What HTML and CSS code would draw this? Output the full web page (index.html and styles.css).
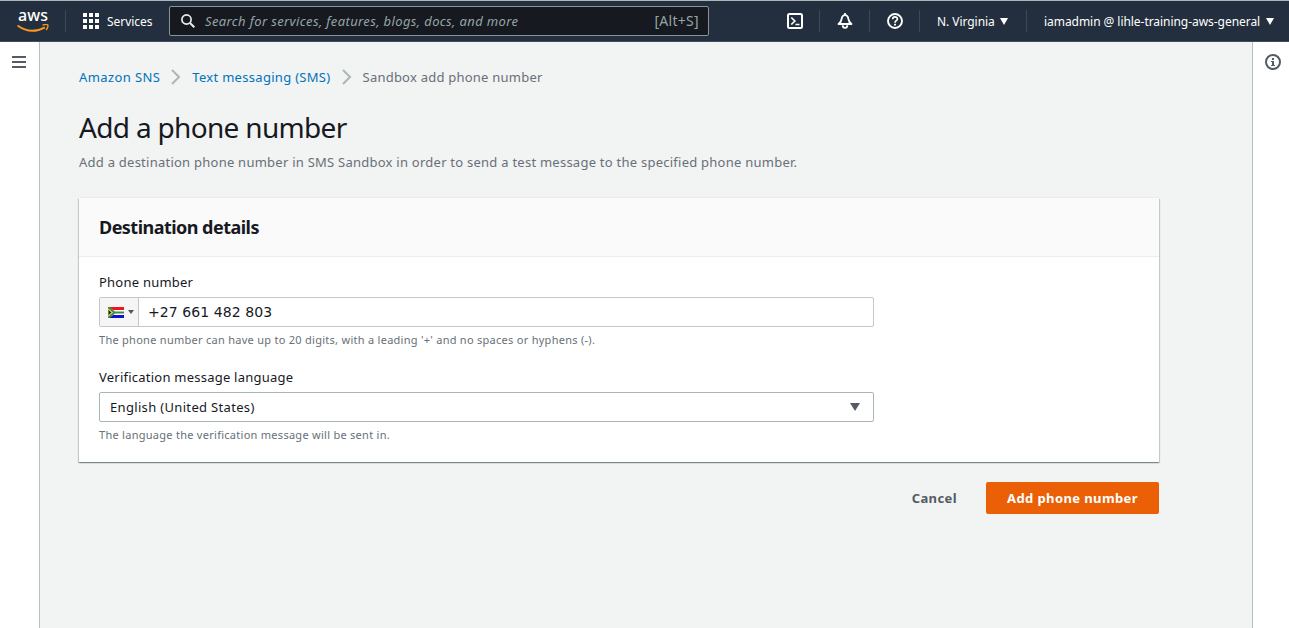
FILE: index.html
```
<!DOCTYPE html>
<html lang="en">
<head>
<meta charset="utf-8">
<title>Add a phone number</title>
<link rel="stylesheet" href="styles.css">
</head>
<body>
<header class="topbar">
  <div class="logo">
    <span class="logo-text">aws</span>
    <svg width="32" height="9" viewBox="0 0 32 9" fill="none" stroke="#f7981f"><path d="M.5 1.500C9 7.800 19 8.200 28 3.300" stroke-width="1.900"/><path d="M25.500 1.300c2-.8 4.600-.9 5.200-.3s0 3.200-1.600 5" stroke-width="1.400"/></svg>
  </div>
  <span class="divider"></span>
  <a class="services">
    <svg width="16" height="16" viewBox="0 0 16 16" fill="#fff"><path d="M0 0h4v4H0zM6 0h4v4H6zM12 0h4v4h-4zM0 6h4v4H0zM6 6h4v4H6zM12 6h4v4h-4zM0 12h4v4H0zM6 12h4v4H6zM12 12h4v4h-4z"/></svg>
    <span class="bar-text">Services</span>
  </a>
  <div class="search">
    <svg width="14" height="14" viewBox="0 0 14 14" fill="none" stroke="#eaeded" stroke-width="1.700"><circle cx="5.500" cy="5.500" r="4.600"/><path d="M9 9l4.300 4.300" stroke-width="2"/></svg>
    <span class="search-placeholder">Search for services, features, blogs, docs, and more</span>
    <span class="search-key">[Alt+S]</span>
  </div>
  <div class="tools">
    <a class="tool"><svg width="16" height="16" viewBox="0 0 16 16" fill="none" stroke="#fff" stroke-width="2"><rect x="1" y="1" width="14" height="14" rx="1.500"/><path d="M4.300 4.500L7.800 8 4.300 11.500M8.500 11.500H12.500" stroke-width="1.700"/></svg></a>
    <a class="tool"><svg width="16" height="16" viewBox="0 0 16 16" fill="none" stroke="#fff" stroke-width="1.800"><path d="M1.500 11C3.800 9.600 4.300 8 4.600 6 5 3.500 6 2.200 8 2.200s3 1.300 3.400 3.800C11.700 8 12.200 9.600 14.500 11z" stroke-linejoin="round"/><path d="M8 0v2M5.700 12.200a2.300 2.700 0 0 0 4.600 0"/></svg></a>
    <a class="tool"><svg width="16" height="16" viewBox="0 0 16 16" fill="none" stroke="#fff" stroke-width="1.900"><circle cx="8" cy="8" r="7"/><path d="M5.700 6.200C5.700 3.200 10.500 3.300 10.400 6 10.400 7.700 8 7.600 8 9.700" stroke-width="1.700"/><path d="M8 10.700v1.800"/></svg></a>
    <a class="menu menu-region"><span class="bar-text">N. Virginia</span><i class="caret"></i></a>
    <a class="menu menu-account"><span class="bar-text">iamadmin @ lihle-training-aws-general</span><i class="caret"></i></a>
  </div>
</header>
<div class="shell">
  <aside class="rail rail-left"><svg width="14" height="12" viewBox="0 0 14 12" fill="#545b64"><path d="M0 0h14v2H0zM0 5h14v2H0zM0 10h14v2H0z"/></svg></aside>
  <main class="main">
    <nav class="crumbs">
      <a class="crumb-service">Amazon SNS</a>
      <svg width="10" height="16" viewBox="0 0 10 16"><path d="M1 1l7 7-7 7"/></svg>
      <a class="crumb-section">Text messaging (SMS)</a>
      <svg width="10" height="16" viewBox="0 0 10 16"><path d="M1 1l7 7-7 7"/></svg>
      <span>Sandbox add phone number</span>
    </nav>
    <h1>Add a phone number</h1>
    <p class="lead">Add a destination phone number in SMS Sandbox in order to send a test message to the specified phone number.</p>
    <section class="card">
      <h2>Destination details</h2>
      <div class="form">
        <label>Phone number</label>
        <div class="field">
          <div class="country">
            <svg width="16" height="11" viewBox="0 0 16 11"><path fill="#fff" d="M0 0h16v11H0z"/><path fill="#f0141e" d="M1 0h15v3H5z"/><path fill="#1010d8" d="M1 11h15V8H5z"/><path fill="none" stroke="#3f8f3f" stroke-width="2.200" d="M0 0l6.500 5.500H16M0 11l6.500-5.500"/><path fill="#222" stroke="#e5d03b" d="M0 2l4 3.500L0 9z"/></svg>
            <i class="caret-small"></i>
          </div>
          <span class="number">+27 661 482 803</span>
        </div>
        <p class="hint">The phone number can have up to 20 digits, with a leading '+' and no spaces or hyphens (-).</p>
        <label class="second">Verification message language</label>
        <div class="field select"><span>English (United States)</span><i class="caret-select"></i></div>
        <p class="hint">The language the verification message will be sent in.</p>
      </div>
    </section>
    <div class="actions"><a class="cancel">Cancel</a><button class="primary">Add phone number</button></div>
  </main>
  <aside class="rail rail-right"><svg width="16" height="16" viewBox="0 0 16 16"><circle cx="8" cy="8" r="7" fill="none" stroke="#545b64" stroke-width="2"/><path fill="#545b64" d="M7 4h2v2H7zM6 7h3v4h1v1H6v-1h1V8H6z"/></svg></aside>
</div>
</body>
</html>
```
FILE: styles.css
```
* { box-sizing: border-box; }
body { margin: 0; height: 628px; overflow: hidden; display: flex; flex-direction: column; background: #f2f3f3; color: #16191f; font: 13px/20px "Noto Sans", "Open Sans", sans-serif; letter-spacing: .23px; }
h1, h2, p { margin: 0; }
svg { display: block; flex: none; }
.topbar { height: 42px; flex: none; display: flex; align-items: center; background: #232f3e; border-top: 1px solid #aab7b8; border-bottom: 1px solid #414d5c; color: #fff; padding-left: 17px; font-size: 12px; letter-spacing: -.05px; }
.logo { width: 32px; }
.logo-text { display: block; height: 14px; padding-left: 1px; font-size: 16px; font-weight: 500; line-height: 11px; letter-spacing: .1px; }
.bar-text { padding-top: 2px; }
.divider { width: 1px; height: 22px; background: #414750; margin-left: 16px; }
.services { display: flex; align-items: center; gap: 8px; margin-left: 17px; width: 86px; white-space: nowrap; }
.search { width: 540px; height: 30px; display: flex; align-items: center; padding: 0 9px 0 11px; background: #16191f; border: 1px solid #879596; border-radius: 2px; color: #95a5a6; font-size: 13px; }
.search-placeholder { margin-left: 10px; font-style: italic; white-space: nowrap; letter-spacing: .37px; }
.search-key { margin-left: auto; font-size: 14px; letter-spacing: .3px; }
.tools { margin-left: auto; display: flex; align-items: center; height: 22px; }
.tool { width: 50px; height: 22px; display: flex; align-items: center; justify-content: center; border-right: 1px solid #414750; }
.menu { display: flex; align-items: center; height: 22px; white-space: nowrap; justify-content: space-between; }
.menu-region { width: 107px; padding: 0 18px 0 17px; border-right: 1px solid #414750; }
.menu-account { width: 262px; padding: 0 15px 0 17px; }
.caret { border: 4px solid transparent; border-top: 7px solid #fff; border-bottom: 0; }
.shell { flex: 1; display: flex; }
.rail { background: #fff; flex: none; display: flex; justify-content: center; padding-top: 14px; }
.rail-left { width: 40px; border-right: 1px solid #b9c0c2; padding-right: 2px; }
.rail-right { width: 37px; border-left: 1px solid #b9c0c2; padding: 12px 0 0 4px; }
.main { flex: 1; padding: 25px 93px 0 39px; }
.crumbs { display: flex; align-items: center; height: 20px; color: #687078; white-space: nowrap; }
.crumbs a { color: #0073bb; }
.crumb-service { letter-spacing: .4px; }
.crumb-section { letter-spacing: .3px; }
.crumbs svg { margin: 0 11px; fill: none; stroke: #aab7b8; stroke-width: 2; }
h1 { font-size: 28px; line-height: 36px; font-weight: 400; margin-top: 22px; white-space: nowrap; letter-spacing: -.68px; }
.lead { margin-top: 7px; color: #687078; white-space: nowrap; letter-spacing: .245px; }
.card { margin-top: 26px; height: 264px; background: #fff; box-shadow: 0 1px 1px rgba(0,28,36,.3), 1px 1px 1px rgba(0,28,36,.15), -1px 1px 1px rgba(0,28,36,.15), 0 -1px 0 #eaeded; }
h2 { height: 59px; padding: 17px 20px; background: #fafafa; border-bottom: 1px solid #eaeded; font-size: 18px; line-height: 24px; letter-spacing: -.53px; }
.form { padding: 15px 20px; }
label { display: block; height: 20px; }
.field { width: 775px; height: 30px; margin-top: 5px; border: 1px solid #c4c8c8; border-radius: 2px; display: flex; align-items: center; }
.country { width: 39px; height: 28px; background: #f5f5f5; border-right: 1px solid #c4c8c8; display: flex; align-items: center; gap: 4px; padding-left: 8px; }
.caret-small { border: 3px solid transparent; border-top: 4px solid #555; border-bottom: 0; }
.number { padding-left: 9px; font: 14px "DejaVu Sans", sans-serif; letter-spacing: .08px; }
.hint { color: #687078; font-size: 11px; line-height: 16px; margin-top: 5px; letter-spacing: .275px; }
.second { margin-top: 19px; }
.select { border-color: #aab7b8; padding: 0 13px 0 10px; justify-content: space-between; letter-spacing: .33px; }
.caret-select { border: 5.5px solid transparent; border-top: 8px solid #545b64; border-bottom: 0; }
.actions { display: flex; justify-content: flex-end; align-items: center; margin-top: 20px; height: 32px; font-weight: 700; letter-spacing: .4px; }
.cancel { color: #545b64; margin-right: 29px; }
.primary { width: 173px; height: 32px; border: 0; border-radius: 2px; padding: 0; background: #eb5f07; color: #fff; font: inherit; letter-spacing: inherit; white-space: nowrap; }
```
